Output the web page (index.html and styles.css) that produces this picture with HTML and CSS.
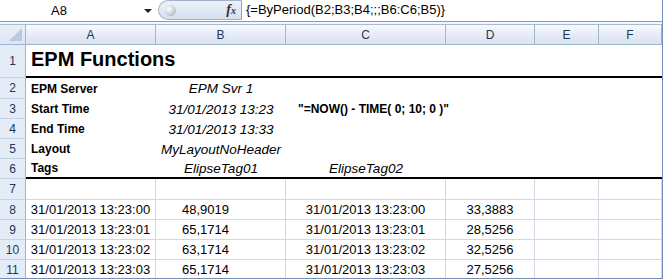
FILE: index.html
```html
<!DOCTYPE html>
<html lang="en">
<head>
<meta charset="UTF-8">
<meta name="viewport" content="width=device-width, initial-scale=1.0">
<title>EPM Functions</title>

<link rel="stylesheet" href="styles.css">
</head>

<body>

<div class="window">

  <!-- FORMULA BAR -->
  <div class="formula-bar">
    <div class="name-box">
      <span class="name">A8</span>
      <span class="arrow"></span>
    </div>
    <div class="fx-pill">
      <span class="knob"></span>
      <span class="fx">f<span class="fx-x">x</span></span>
    </div>
    <div class="formula">{=ByPeriod(B2;B3;B4;;;B6:C6;B5)}</div>
  </div>
  <div class="bar-gap"></div>

  <!-- SHEET -->
  <div class="sheet">
    <div class="corner"><span class="tri"></span></div>
    <div class="col-head">A</div>
    <div class="col-head">B</div>
    <div class="col-head">C</div>
    <div class="col-head">D</div>
    <div class="col-head">E</div>
    <div class="col-head">F</div>

    <!-- row 1 -->
    <div class="row-head">1</div>
    <div class="cell thick title">EPM Functions</div>
    <div class="cell thick"></div>
    <div class="cell thick"></div>
    <div class="cell thick"></div>
    <div class="cell thick"></div>
    <div class="cell thick"></div>

    <!-- row 2 -->
    <div class="row-head">2</div>
    <div class="cell label">EPM Server</div>
    <div class="cell value">EPM Svr 1</div>
    <div class="cell"></div>
    <div class="cell"></div>
    <div class="cell"></div>
    <div class="cell"></div>

    <!-- row 3 -->
    <div class="row-head">3</div>
    <div class="cell label">Start Time</div>
    <div class="cell value">31/01/2013 13:23</div>
    <div class="cell note">"=NOW() - TIME( 0; 10; 0 )"</div>
    <div class="cell"></div>
    <div class="cell"></div>
    <div class="cell"></div>

    <!-- row 4 -->
    <div class="row-head">4</div>
    <div class="cell label">End Time</div>
    <div class="cell value">31/01/2013 13:33</div>
    <div class="cell"></div>
    <div class="cell"></div>
    <div class="cell"></div>
    <div class="cell"></div>

    <!-- row 5 -->
    <div class="row-head">5</div>
    <div class="cell label">Layout</div>
    <div class="cell value">MyLayoutNoHeader</div>
    <div class="cell"></div>
    <div class="cell"></div>
    <div class="cell"></div>
    <div class="cell"></div>

    <!-- row 6 -->
    <div class="row-head">6</div>
    <div class="cell thick label">Tags</div>
    <div class="cell thick value">ElipseTag01</div>
    <div class="cell thick value">ElipseTag02</div>
    <div class="cell thick"></div>
    <div class="cell thick"></div>
    <div class="cell thick"></div>

    <!-- row 7 -->
    <div class="row-head">7</div>
    <div class="cell grid"></div>
    <div class="cell grid"></div>
    <div class="cell grid"></div>
    <div class="cell grid"></div>
    <div class="cell grid"></div>
    <div class="cell grid"></div>

    <!-- data rows -->
    <div class="row-head">8</div>
    <div class="cell grid data">31/01/2013 13:23:00</div>
    <div class="cell grid data num">48,9019</div>
    <div class="cell grid data">31/01/2013 13:23:00</div>
    <div class="cell grid data">33,3883</div>
    <div class="cell grid"></div>
    <div class="cell grid"></div>

    <div class="row-head">9</div>
    <div class="cell grid data">31/01/2013 13:23:01</div>
    <div class="cell grid data num">65,1714</div>
    <div class="cell grid data">31/01/2013 13:23:01</div>
    <div class="cell grid data">28,5256</div>
    <div class="cell grid"></div>
    <div class="cell grid"></div>

    <div class="row-head">10</div>
    <div class="cell grid data">31/01/2013 13:23:02</div>
    <div class="cell grid data num">63,1714</div>
    <div class="cell grid data">31/01/2013 13:23:02</div>
    <div class="cell grid data">32,5256</div>
    <div class="cell grid"></div>
    <div class="cell grid"></div>

    <div class="row-head">11</div>
    <div class="cell grid data">31/01/2013 13:23:03</div>
    <div class="cell grid data num">65,1714</div>
    <div class="cell grid data">31/01/2013 13:23:03</div>
    <div class="cell grid data">27,5256</div>
    <div class="cell grid"></div>
    <div class="cell grid"></div>
  </div>

</div>

</body>
</html>
```

FILE: styles.css
```css
body {
  margin: 0;
  background: #ffffff;
  font-family: 'Liberation Sans', Arial, sans-serif;
}

.window {
  width: 663px;
  height: 279px;
  box-sizing: border-box;
  border-right: 1px solid #6f90bd;
  border-bottom: 1px solid #6f90bd;
  overflow: hidden;
}

/* FORMULA BAR */
.formula-bar {
  display: flex;
  height: 21px;
  border-bottom: 1px solid #7f9cc3;
  background: #ffffff;
}

.name-box {
  width: 158px;
  display: flex;
  align-items: center;
  font-size: 13px;
  color: #000;
}

.name-box .name {
  flex: 1;
  text-align: center;
  padding-right: 26px;
}

.name-box .arrow {
  width: 0;
  height: 0;
  border-left: 4px solid transparent;
  border-right: 4px solid transparent;
  border-top: 4px solid #222;
  margin-right: 6px;
  margin-top: 1px;
}

.fx-pill {
  width: 84px;
  height: 20px;
  box-sizing: border-box;
  border: 1px solid #9fb3cf;
  border-right: 1px solid #8ea6c6;
  border-radius: 11px 0 0 11px;
  background: linear-gradient(#edf2f9, #d5e0ee);
  display: flex;
  align-items: center;
  justify-content: space-between;
  padding: 0 5px 0 6px;
}

.knob {
  width: 11px;
  height: 11px;
  border-radius: 50%;
  background: radial-gradient(circle at 35% 35%, #ffffff, #b9c2cc 70%, #8e99a6);
}

.fx {
  font-family: 'Liberation Serif', serif;
  font-style: italic;
  font-weight: bold;
  font-size: 14px;
  color: #333;
}

.fx-x {
  font-size: 10px;
}

.formula {
  flex: 1;
  font-size: 13px;
  padding-left: 4px;
  line-height: 20px;
  color: #000;
}

.bar-gap {
  height: 2px;
  background: #f2f5fa;
  border-bottom: 1px solid #a9bcd6;
}

/* SHEET */
.sheet {
  display: grid;
  grid-template-columns: 26px 130px 130px 160px 89px 64px 63px;
  grid-template-rows: 20px 33px 21px repeat(4, 20px) 21px repeat(4, 20px);
}

.sheet > div {
  box-sizing: border-box;
}

.corner {
  background: linear-gradient(#e9eff8, #dce6f3);
  border-right: 1px solid #9eb6ce;
  border-bottom: 1px solid #9eb6ce;
  position: relative;
}

.corner .tri {
  position: absolute;
  right: 3px;
  bottom: 3px;
  width: 0;
  height: 0;
  border-left: 13px solid transparent;
  border-bottom: 13px solid #b8c9e0;
}

.col-head {
  background: linear-gradient(#f8fafd, #e3eaf5 60%, #d9e2ef);
  border-right: 1px solid #9eb6ce;
  border-bottom: 1px solid #9eb6ce;
  color: #1e3653;
  font-size: 12px;
  display: flex;
  align-items: center;
  justify-content: center;
}

.row-head {
  background: #e4ecf7;
  border-right: 1px solid #9eb6ce;
  border-bottom: 1px solid #c5d3e6;
  color: #1e3653;
  font-size: 12px;
  display: flex;
  align-items: center;
  justify-content: center;
}

.cell {
  display: flex;
  align-items: center;
  white-space: nowrap;
  font-size: 12px;
  color: #000;
}

.thick {
  border-bottom: 2px solid #000;
}

.grid {
  border-right: 1px solid #d0d7e5;
  border-bottom: 1px solid #d0d7e5;
}

.title {
  font-size: 20px;
  font-weight: bold;
  padding-left: 5px;
  align-items: flex-end;
  padding-bottom: 5px;
}

.label {
  font-weight: bold;
  padding-left: 5px;
}

.value {
  font-style: italic;
  font-size: 13.5px;
  justify-content: center;
}

.note {
  font-weight: bold;
  padding-left: 12px;
}

.data {
  font-size: 13px;
  justify-content: center;
}

.data.num {
  justify-content: flex-start;
  padding-left: 26px;
}
```
